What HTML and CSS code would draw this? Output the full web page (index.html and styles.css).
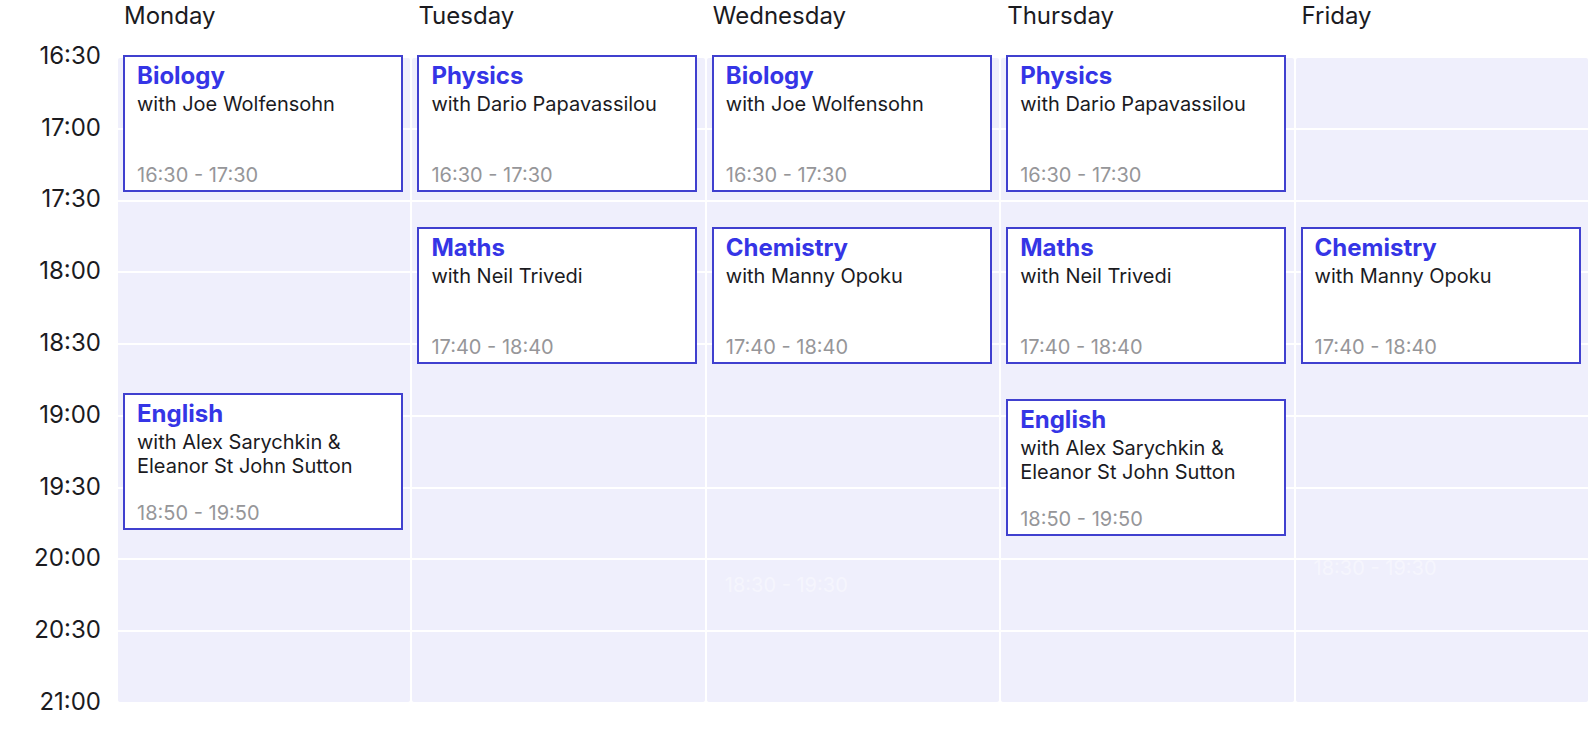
FILE: index.html
```html
<!DOCTYPE html>
<html lang="en">
<head>
<meta charset="utf-8">
<title>Timetable</title>
<link rel="stylesheet" href="styles.css">
</head>
<body>
<div class="calendar">
  <div class="times">
    <div class="time">16:30</div>
    <div class="time">17:00</div>
    <div class="time">17:30</div>
    <div class="time">18:00</div>
    <div class="time">18:30</div>
    <div class="time">19:00</div>
    <div class="time">19:30</div>
    <div class="time">20:00</div>
    <div class="time">20:30</div>
    <div class="time">21:00</div>
  </div>

  <div class="day-name">Monday</div>
  <div class="day-name">Tuesday</div>
  <div class="day-name">Wednesday</div>
  <div class="day-name">Thursday</div>
  <div class="day-name">Friday</div>

  <div class="day">
    <div class="slot"></div><div class="slot"></div><div class="slot"></div>
    <div class="slot"></div><div class="slot"></div><div class="slot"></div>
    <div class="slot"></div><div class="slot"></div><div class="slot"></div>
    <div class="event" style="top:-3px">
      <div class="subject">Biology</div>
      <div class="teacher">with Joe Wolfensohn</div>
      <div class="range">16:30 - 17:30</div>
    </div>
    <div class="event" style="top:335px">
      <div class="subject">English</div>
      <div class="teacher">with Alex Sarychkin &amp;<br>Eleanor St John Sutton</div>
      <div class="range">18:50 - 19:50</div>
    </div>
  </div>

  <div class="day">
    <div class="slot"></div><div class="slot"></div><div class="slot"></div>
    <div class="slot"></div><div class="slot"></div><div class="slot"></div>
    <div class="slot"></div><div class="slot"></div><div class="slot"></div>
    <div class="event" style="top:-3px">
      <div class="subject">Physics</div>
      <div class="teacher">with Dario Papavassilou</div>
      <div class="range">16:30 - 17:30</div>
    </div>
    <div class="event" style="top:169px">
      <div class="subject">Maths</div>
      <div class="teacher">with Neil Trivedi</div>
      <div class="range">17:40 - 18:40</div>
    </div>
  </div>

  <div class="day">
    <div class="slot"></div><div class="slot"></div><div class="slot"></div>
    <div class="slot"></div><div class="slot"></div><div class="slot"></div>
    <div class="slot"></div><div class="slot"></div><div class="slot"></div>
    <div class="event" style="top:-3px">
      <div class="subject">Biology</div>
      <div class="teacher">with Joe Wolfensohn</div>
      <div class="range">16:30 - 17:30</div>
    </div>
    <div class="event" style="top:169px">
      <div class="subject">Chemistry</div>
      <div class="teacher">with Manny Opoku</div>
      <div class="range">17:40 - 18:40</div>
    </div>
    <div class="ghost" style="top:515px">18:30 - 19:30</div>
  </div>

  <div class="day">
    <div class="slot"></div><div class="slot"></div><div class="slot"></div>
    <div class="slot"></div><div class="slot"></div><div class="slot"></div>
    <div class="slot"></div><div class="slot"></div><div class="slot"></div>
    <div class="event" style="top:-3px">
      <div class="subject">Physics</div>
      <div class="teacher">with Dario Papavassilou</div>
      <div class="range">16:30 - 17:30</div>
    </div>
    <div class="event" style="top:169px">
      <div class="subject">Maths</div>
      <div class="teacher">with Neil Trivedi</div>
      <div class="range">17:40 - 18:40</div>
    </div>
    <div class="event" style="top:341px">
      <div class="subject">English</div>
      <div class="teacher">with Alex Sarychkin &amp;<br>Eleanor St John Sutton</div>
      <div class="range">18:50 - 19:50</div>
    </div>
  </div>

  <div class="day">
    <div class="slot"></div><div class="slot"></div><div class="slot"></div>
    <div class="slot"></div><div class="slot"></div><div class="slot"></div>
    <div class="slot"></div><div class="slot"></div><div class="slot"></div>
    <div class="event" style="top:169px">
      <div class="subject">Chemistry</div>
      <div class="teacher">with Manny Opoku</div>
      <div class="range">17:40 - 18:40</div>
    </div>
    <div class="ghost" style="top:498px">18:30 - 19:30</div>
  </div>
</div>
</body>
</html>
```

FILE: styles.css
```css
* {
  box-sizing: border-box;
}

html, body {
  margin: 0;
  padding: 0;
  background: #ffffff;
}

body {
  font-family: "Inter", "Liberation Sans", sans-serif;
  color: #1b1b1f;
  width: 1590px;
  height: 740px;
  overflow: hidden;
}

.calendar {
  display: grid;
  grid-template-columns: 116px repeat(5, 1fr);
  grid-template-rows: 58px 644px;
  column-gap: 2px;
  padding-right: 2px;
}

.times {
  grid-column: 1;
  grid-row: 1 / 3;
  padding-top: 20px;
  display: flex;
  flex-direction: column;
}

.time {
  height: 71.8px;
  flex: none;
  display: flex;
  align-items: center;
  justify-content: flex-end;
  padding-right: 15px;
  font-size: 24px;
  line-height: 1;
  color: #1b1b1f;
}

.day-name {
  grid-row: 1;
  padding: 2px 0 0 6px;
  font-size: 24px;
  line-height: 1.2;
  color: #1b1b1f;
}

.day-name:nth-child(2) { grid-column: 2; }
.day-name:nth-child(3) { grid-column: 3; }
.day-name:nth-child(4) { grid-column: 4; }
.day-name:nth-child(5) { grid-column: 5; }
.day-name:nth-child(6) { grid-column: 6; }

.day {
  grid-row: 2;
  position: relative;
  display: grid;
  grid-template-rows: repeat(9, 1fr);
  row-gap: 2px;
}

.slot {
  background: #efeffc;
}

.day .slot:first-child {
  border-radius: 2px 2px 0 0;
}

.day .slot:nth-child(9) {
  border-radius: 0 0 2px 2px;
}

.event {
  position: absolute;
  left: 5px;
  width: 280px;
  height: 137px;
  background: #ffffff;
  border: 2px solid #4040cf;
  padding: 3px 12px 3px 12px;
  display: flex;
  flex-direction: column;
}

.subject {
  font-size: 24px;
  font-weight: 700;
  line-height: 32px;
  color: #3535e6;
}

.teacher {
  font-size: 20px;
  line-height: 24px;
  color: #1b1b1f;
}

.range {
  margin-top: auto;
  font-size: 20px;
  line-height: 24px;
  color: #969699;
}

.ghost {
  position: absolute;
  left: 18px;
  font-size: 20px;
  line-height: 24px;
  color: rgba(255, 255, 255, 0.4);
}
```
